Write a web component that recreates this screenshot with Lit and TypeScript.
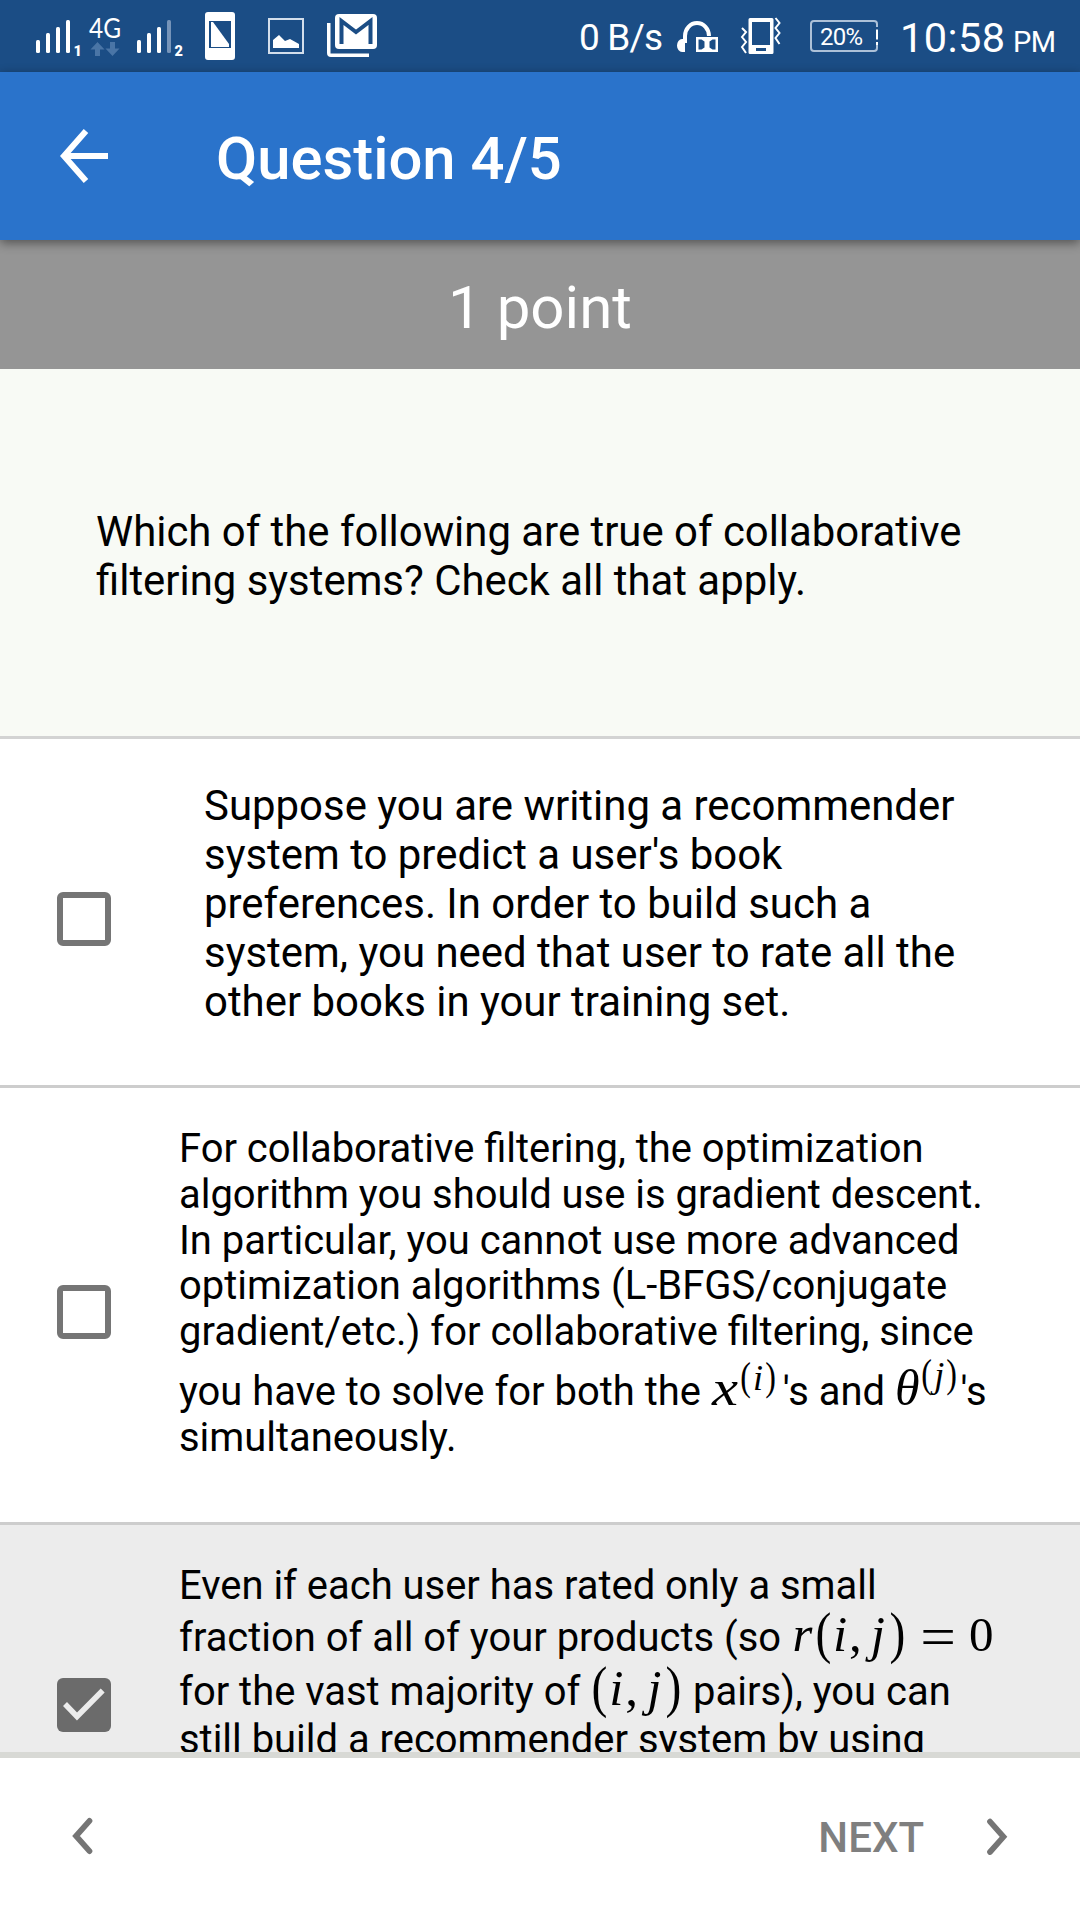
import { LitElement, html, css, svg } from "lit";
import { customElement } from "lit/decorators.js";

@customElement("status-bar")
class StatusBar extends LitElement {
  static styles = css`
    :host { display: block; height: 72px; background: #1b4d85; }
    svg { display: block; }
    text { font-family: Roboto, sans-serif; fill: #fff; }
    .net { font-family: Lato, sans-serif; }
  `;
  render() {
    return html`<svg width="1080" height="72" viewBox="0 0 1080 72" fill="#fff">
      <g>
        <rect x="36" y="40" width="4" height="13" rx="1.5" />
        <rect x="46" y="33" width="4" height="20" rx="1.5" />
        <rect x="56" y="27" width="4" height="26" rx="1.5" />
        <rect x="66" y="20" width="4" height="33" rx="1.5" />
        <text x="73.5" y="55.5" font-size="14.5" font-weight="900">1</text>
        <text class="net" x="89" y="37.5" font-size="27" textLength="32" lengthAdjust="spacingAndGlyphs">4G</text>
        <path d="M97.5 42l7 7.500h-4.500v6.500h-5v-6.500h-4.500z M112.500 56l7-7.500h-4.500v-6.500h-5v6.500h-4.500z" fill="#4a75a6" />
        <rect x="137" y="40" width="4" height="13" rx="1.500" />
        <rect x="147" y="33" width="4" height="20" rx="1.500" />
        <rect x="157" y="27" width="4" height="26" rx="1.500" />
        <rect x="167" y="20" width="4" height="33" rx="1.500" fill="#7694b9" />
        <text x="174.500" y="55.500" font-size="14.500" font-weight="900">2</text>
      </g>
      <path fill-rule="evenodd" d="M208 12h24q3 0 3 3v42q0 3-3 3h-24q-3 0-3-3V15q0-3 3-3z M209 21v27h22V21z" />
      <path d="M211 22h2l16 22v3h-18z" />
      <rect x="269" y="19" width="34" height="34" fill="none" stroke="#d3deeb" stroke-width="2" />
      <path d="M273 48v-8l6-5 6 6 5-2 9 5v4z" />
      <path d="M327 23h3.500v30.500H369V57H331q-4 0-4-4z" />
      <rect x="335" y="14" width="42" height="35" rx="4" />
      <path d="M341.500 44V21L356 32l14.500-11v23" fill="none" stroke="#1b4d85" stroke-width="4" />
      <text x="579" y="50" font-size="37" textLength="84">0 B/s</text>
      <path d="M685 43v-7a12 13 0 0 1 24 0" fill="none" stroke="#fff" stroke-width="4" />
      <path d="M685 39v13h-3a5 6.500 0 0 1 0-13z" />
      <path fill-rule="evenodd" d="M696 37h22v15h-22z M698.500 39.500v10h3l3-2v-6l-3-2z M715.500 39.500h-3l-3 2v6l3 2h3z" />
      <path fill-rule="evenodd" d="M750 18h22q1.500 0 1.500 1.500v33q0 1.500-1.500 1.500h-22q-1.500 0-1.500-1.500v-33q0-1.500 1.500-1.500z M752 22v23h18V22z M756 48v3h10v-3z" />
      <path d="M742 28l4 4-4 5 4 5-4 5 4 6 M775.500 18l4 5-4 5 4 5-4 5 4 6" fill="none" stroke="#fff" stroke-width="2" />
      <path d="M877 27v-3q0-3-3-3H814q-3 0-3 3v24q0 3 3 3h60q3 0 3-3v-3" fill="none" stroke="#adc1d8" stroke-width="2" />
      <path d="M877 29.500v10 M877 42v3" stroke="#fff" stroke-width="2" />
      <text x="820" y="45" font-size="24" textLength="43">20%</text>
      <text x="900" y="52" font-size="41.500" textLength="105">10:58</text>
      <text x="1013" y="52" font-size="29" textLength="43">PM</text>
    </svg>`;
  }
}

@customElement("check-row")
class CheckRow extends LitElement {
  static properties = { checked: { type: Boolean } };
  declare checked: boolean;
  static styles = css`
    :host { display: flex; box-sizing: border-box; border-bottom: 3px solid #cdcdcd; padding-left: 57px; overflow: hidden; }
    .box { flex: none; box-sizing: border-box; width: 54px; height: 54px; border: 6px solid #757575; border-radius: 6px; margin-top: var(--box-top); }
    .on { background: #6b6b6b; border: 0; }
    svg { display: block; }
    .body { margin-left: var(--gap); margin-top: var(--text-top); }
  `;
  render() {
    return html`<div class=${this.checked ? "box on" : "box"}>
        ${this.checked
          ? html`<svg width="54" height="54" viewBox="0 0 54 54">${svg`<path d="M8 26l12 12.500L45.700 12.500" fill="none" stroke="#ececec" stroke-width="5.500"/>`}</svg>`
          : ""}
      </div>
      <div class="body"><slot></slot></div>`;
  }
}

// The pair "(i, j)" as typeset math, one cell per symbol.
const pair = html`<span class="g par">(</span><span class="g i">i</span><span class="g com">,</span><span class="g j">j</span><span class="g par">)</span>`;

@customElement("app-root")
class AppRoot extends LitElement {
  static styles = css`
    :host { display: flex; flex-direction: column; width: 1080px; height: 1920px; overflow: hidden; background: #fff; font-family: Roboto, sans-serif; color: #000; }
    .bar { position: relative; height: 168px; flex: none; background: #2a73cb; box-shadow: 0 3px 10px rgba(0, 0, 0, .45); display: flex; align-items: center; color: #fff; }
    .bar svg { margin-left: 60px; flex: none; }
    .title { margin-left: 108px; margin-top: 5px; font-size: 59.8px; font-weight: 500; line-height: 70px; }
    .points { height: 129px; flex: none; background: #959595; color: #fff; text-align: center; font-size: 60px; line-height: 136px; }
    .prompt { flex: none; height: 370px; box-sizing: border-box; border-bottom: 3px solid #d3d3d3; background: #f8faf5; padding: 138px 0 0 96px; }
    .line { display: block; white-space: nowrap; }
    .big .line, .prompt .line { font-size: 41.930px; line-height: 49px; height: 49px; }
    .prompt .line { font-size: 41.880px; }
    .mid .line { font-size: 39.930px; line-height: 45.750px; height: 45.750px; }
    .list { flex: 1; min-height: 0; overflow: hidden; display: flex; flex-direction: column; }
    check-row { flex: none; }
    .big { height: 349px; --box-top: 153px; --gap: 93px; --text-top: 42px; }
    .mid { height: 437px; --box-top: 197px; --gap: 68px; --text-top: 38px; }
    .sel { height: 437px; background: #ececec; --box-top: 153px; --text-top: 38px; }
    .gap1 { margin-top: 14px; }
    .gap2 { margin-top: 6px; }
    .gap3 { margin-top: 8px; }
    .gap4 { margin-top: 3px; }
    .g { display: inline-block; font-family: "Liberation Serif", serif; font-style: italic; font-size: 51px; line-height: 1px; text-align: center; }
    .par { font-style: normal; font-size: 56px; width: 19px; transform: translateY(1px) scaleX(.85); }
    .r { width: 23px; }
    .i { width: 14px; }
    .com { width: 17px; font-style: normal; }
    .j { width: 20px; margin-left: 4px; }
    .eq { width: 62px; font-style: normal; font-size: 56px; transform: translateY(5px) scaleX(1.13); }
    .zero { width: 24px; font-style: normal; font-size: 49px; }
    .x { width: 28px; transform: scaleX(1.15); }
    .th { width: 25px; font-size: 50px; }
    .sup { display: inline-block; line-height: 1px; transform: translateY(-15.500px); margin-right: -4.500px; }
    .hi { transform: translateY(-18px); margin-right: 2px; }
    .sup .g { font-size: 36px; width: 12px; }
    .sup .par { font-size: 40px; width: 13.300px; transform: scaleX(.8); }
    .foot { flex: none; height: 168px; box-sizing: border-box; border-top: 6px solid #d8d9d5; display: flex; align-items: center; padding: 0 72px 6px 71px; color: #7f7f7f; }
    .next { margin: 3px 60px 0 auto; font-size: 42px; font-weight: 500; line-height: 50px; }
  `;
  render() {
    return html`<status-bar></status-bar>
      <header class="bar">
        <svg width="48" height="56" viewBox="0 0 48 56"><path d="M48 28H5 M26 3L4 28l22 25" fill="none" stroke="#fff" stroke-width="6" /></svg>
        <div class="title">Question 4/5</div>
      </header>
      <div class="points">1 point</div>
      <section class="prompt">
        <span class="line">Which of the following are true of collaborative</span>
        <span class="line">filtering systems? Check all that apply.</span>
      </section>
      <div class="list">
        <check-row class="big">
          <span class="line">Suppose you are writing a recommender</span>
          <span class="line">system to predict a user's book</span>
          <span class="line">preferences. In order to build such a</span>
          <span class="line">system, you need that user to rate all the</span>
          <span class="line">other books in your training set.</span>
        </check-row>
        <check-row class="mid">
          <span class="line">For collaborative filtering, the optimization</span>
          <span class="line">algorithm you should use is gradient descent.</span>
          <span class="line">In particular, you cannot use more advanced</span>
          <span class="line">optimization algorithms (L-BFGS/conjugate</span>
          <span class="line">gradient/etc.) for collaborative filtering, since</span>
          <span class="line gap1">you have to solve for both the <span class="g x">x</span><span class="sup"><span class="g par">(</span><span class="g">i</span><span class="g par">)</span></span> 's and <span class="g th">θ</span><span class="sup hi"><span class="g par">(</span><span class="g">j</span><span class="g par">)</span></span>'s</span>
          <span class="line">simultaneously.</span>
        </check-row>
        <check-row class="mid sel" checked>
          <span class="line">Even if each user has rated only a small</span>
          <span class="line gap2">fraction of all of your products (so <span class="g r">r</span>${pair}<span class="g eq">=</span><span class="g zero">0</span></span>
          <span class="line gap3">for the vast majority of ${pair} pairs), you can</span>
          <span class="line gap4">still build a recommender system by using</span>
        </check-row>
      </div>
      <footer class="foot">
        <svg width="24" height="40" viewBox="0 0 24 40"><path d="M18.500 4.800L5 20l13.500 15.200" fill="none" stroke="#757575" stroke-width="5.700" stroke-linecap="round" /></svg>
        <div class="next">NEXT</div>
        <svg width="24" height="40" viewBox="0 0 24 40"><path d="M6 5.600l13.500 15.200L6 36" fill="none" stroke="#757575" stroke-width="5.700" stroke-linecap="round" /></svg>
      </footer>`;
  }
}
